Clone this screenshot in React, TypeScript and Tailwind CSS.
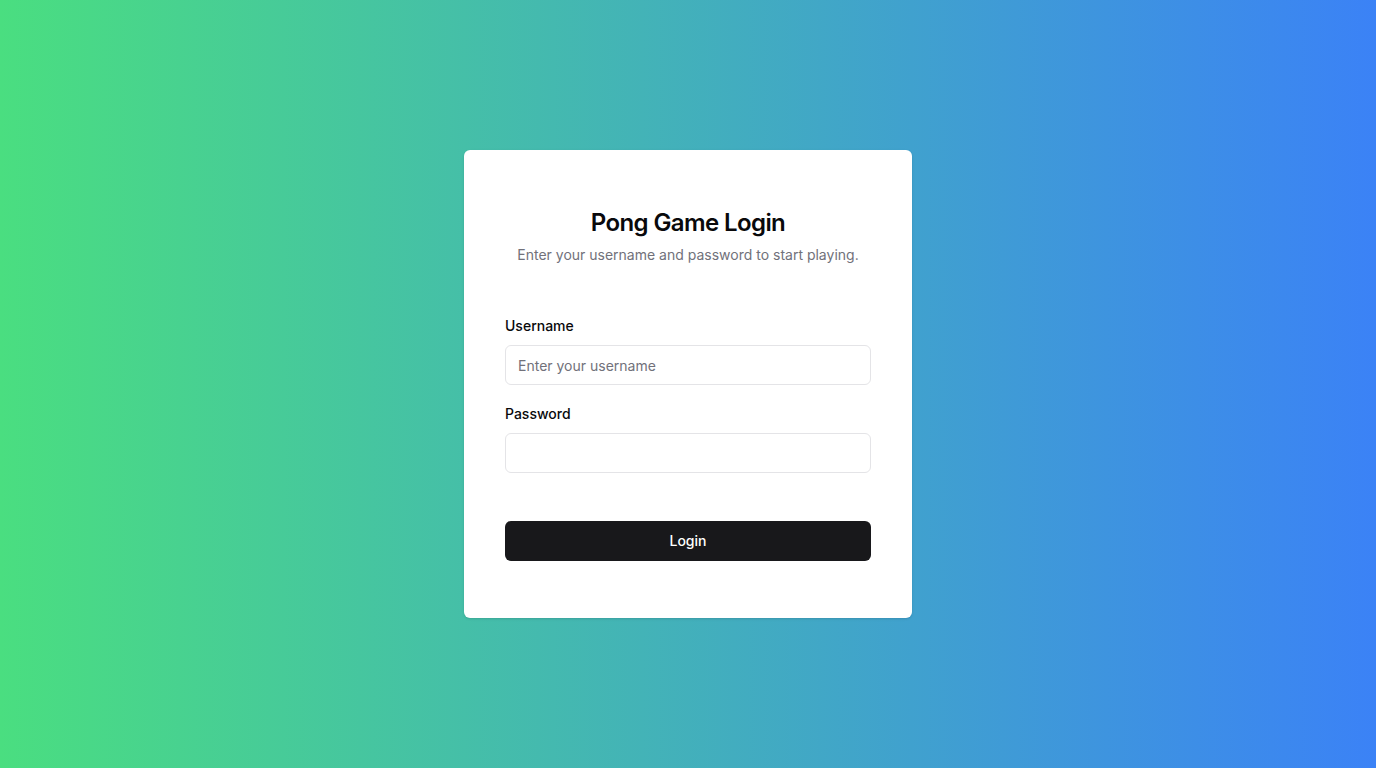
export default function App() {
  return (
    <div
      className="min-h-screen flex items-center justify-center bg-[linear-gradient(to_right,#4ade80,#3b82f6)]"
      style={{ fontFamily: 'Inter, "Noto Sans", sans-serif' }}
    >
      <div className="w-[448px] rounded-md bg-white shadow-sm px-[41px] pt-[57px] pb-[57px]">
        <div className="text-center">
          <h1 className="text-2xl leading-8 font-semibold tracking-tight text-[#09090b]">Pong Game Login</h1>
          <p className="mt-[6px] text-sm leading-5 text-[#71717a]">
            Enter your username and password to start playing.
          </p>
        </div>

        <form className="mt-[51px]" onSubmit={(e) => e.preventDefault()}>
          <label htmlFor="username" className="block text-sm leading-5 font-medium text-[#09090b]">
            Username
          </label>
          <input
            id="username"
            type="text"
            placeholder="Enter your username"
            className="mt-[9px] block w-full h-10 rounded-md border border-[#e4e4e7] px-3 text-sm text-[#09090b] placeholder:text-[#71717a] outline-none"
          />

          <label htmlFor="password" className="mt-[19px] block text-sm leading-5 font-medium text-[#09090b]">
            Password
          </label>
          <input
            id="password"
            type="password"
            className="mt-[9px] block w-full h-10 rounded-md border border-[#e4e4e7] px-3 text-sm text-[#09090b] outline-none"
          />

          <button
            type="submit"
            className="mt-12 w-full h-10 rounded-md bg-[#18181b] text-white text-sm font-medium"
          >
            Login
          </button>
        </form>
      </div>
    </div>
  );
}
